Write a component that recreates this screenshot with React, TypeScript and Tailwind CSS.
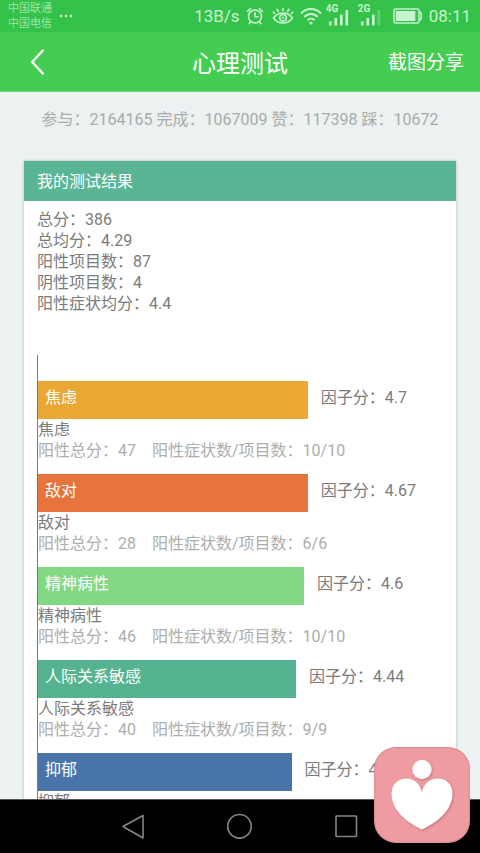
import { clsx } from "clsx";

type Factor = {
  name: string;
  total: number;
  items: string;
  score: string;
  width: number;
  color: string;
};

const stats = [
  ["参与", "2164165"],
  ["完成", "1067009"],
  ["赞", "117398"],
  ["踩", "10672"],
];

const summary = [
  ["总分", "386"],
  ["总均分", "4.29"],
  ["阳性项目数", "87"],
  ["阴性项目数", "4"],
  ["阳性症状均分", "4.4"],
];

const factors: Factor[] = [
  { name: "焦虑", total: 47, items: "10/10", score: "4.7", width: 66.6, color: "bg-[#e8a833]" },
  { name: "敌对", total: 28, items: "6/6", score: "4.67", width: 66.6, color: "bg-[#e7743c]" },
  { name: "精神病性", total: 46, items: "10/10", score: "4.6", width: 65.7, color: "bg-[#83d883]" },
  { name: "人际关系敏感", total: 40, items: "9/9", score: "4.44", width: 63.7, color: "bg-[#55b48f]" },
  { name: "抑郁", total: 57, items: "13/13", score: "4.38", width: 62.6, color: "bg-[#4874a9]" },
];

function SignalIcon({ label, weak }: { label: string; weak?: boolean }) {
  return (
    <span className="relative block h-[22px] w-[22px]">
      <span className="absolute -left-0.5 -top-0.5 text-[10px] font-bold leading-[11px]">{label}</span>
      <svg viewBox="0 0 22 22" className="h-full w-full" fill="currentColor">
        <rect x="1" y="16.5" width="2.6" height="4" />
        <rect x="6.5" y="13" width="2.6" height="7.5" />
        <rect x="12" y="9.5" width="2.6" height="11" />
        <rect x="17.5" y="5" width="2.6" height="15.5" opacity={weak ? 0.3 : 1} />
      </svg>
    </span>
  );
}

function StatusBar() {
  return (
    <div className="flex h-8 shrink-0 items-center bg-[#34c24b] pl-2 pr-[9px] text-[#c9f2cf]">
      <div className="text-[11px] font-light leading-[15px]">
        <div>中国联通</div>
        <div>中国电信</div>
      </div>
      <svg viewBox="0 0 14 4" className="ml-[7px] h-1 w-3.5" fill="currentColor">
        <circle cx="2" cy="2" r="1.3" />
        <circle cx="7" cy="2" r="1.3" />
        <circle cx="12" cy="2" r="1.3" />
      </svg>
      <div className="ml-auto flex items-center">
        <span className="text-[17px] leading-5">13B/s</span>
        <svg viewBox="0 0 18 18" className="ml-1.5 h-[18px] w-[18px]" fill="none" stroke="currentColor" strokeWidth="1.6" strokeLinecap="round">
          <circle cx="9" cy="9.5" r="6.5" />
          <path d="M9 5.8v4h3.2M1.5 4.3 4.5 1.6M16.5 4.3l-3-2.7M4.3 15l-1.2 1.7M13.7 15l1.2 1.7" />
        </svg>
        <svg viewBox="0 0 22 18" className="ml-2 h-[18px] w-[22px]" fill="none" stroke="currentColor" strokeWidth="1.6" strokeLinecap="round">
          <path d="M1.5 11C4 7.5 7.3 6 11 6s7 1.5 9.5 5c-2.5 3.5-5.8 5-9.500 5s-7-1.5-9.500-5Z" />
          <circle cx="11" cy="10.8" r="3.3" />
          <circle cx="11" cy="10.8" r="1" fill="currentColor" stroke="none" />
          <path d="M11 3.5v-2M6.3 4.3 5 2.3M15.7 4.3 17 2.3M2.6 6.5 1.2 5M19.4 6.5 20.8 5" />
        </svg>
        <svg viewBox="0 0 22 18" className="ml-1.5 h-[18px] w-[22px]" fill="none" stroke="currentColor" strokeWidth="2">
          <path d="M1 6.5C6.5.6 15.5.6 21 6.5M4.3 10c3.8-3.9 9.6-3.9 13.4 0M7.5 13.2c2-2 5-2 7 0" />
          <circle cx="11" cy="16" r="1.6" fill="currentColor" stroke="none" />
        </svg>
        <span className="ml-1.5">
          <SignalIcon label="4G" />
        </span>
        <span className="ml-2.5">
          <SignalIcon label="2G" weak />
        </span>
        <svg viewBox="0 0 30 16" className="ml-[11px] h-4 w-[30px]" fill="none" stroke="currentColor" strokeWidth="1.5">
          <rect x="1" y="1" width="25" height="14" rx="2" />
          <rect x="2.8" y="3" width="19.5" height="10" fill="currentColor" stroke="none" />
          <path d="M26.500 3.500c2.500 1 2.500 8 0 9" />
        </svg>
        <span className="ml-1.5 text-[17px] leading-5">08:11</span>
      </div>
    </div>
  );
}

function TitleBar() {
  return (
    <header className="grid h-[60px] shrink-0 grid-cols-3 items-center border-b border-[#79d583] bg-[#44cd51] px-4 text-white">
      <button type="button" aria-label="返回" className="ml-3 w-6">
        <svg viewBox="0 0 24 32" className="h-8 w-6" fill="none" stroke="currentColor" strokeWidth="2.4" strokeLinecap="round" strokeLinejoin="round">
          <path d="M14.800 4.500 4.200 16 14.800 27.500" />
        </svg>
      </button>
      <h1 className="pt-1 text-center text-2xl">心理测试</h1>
      <button type="button" className="justify-self-end pt-1 text-[19px]">
        截图分享
      </button>
    </header>
  );
}

function FactorRow({ factor }: { factor: Factor }) {
  return (
    <li className="mb-[13px]">
      <div className="flex h-[38px]">
        <div
          className={clsx("shrink-0 pl-[7px] leading-[34px] text-white", factor.color)}
          style={{ width: `${factor.width}%` }}
        >
          {factor.name}
        </div>
        <div className="whitespace-nowrap pl-[13px] leading-[34px] text-[#7b7b7b]">因子分：{factor.score}</div>
      </div>
      <div className="leading-[21px] text-[#7b7b7b]">{factor.name}</div>
      <div className="flex gap-4 whitespace-nowrap leading-[21px] text-[#adadad]">
        <span>阳性总分：{factor.total}</span>
        <span>阳性症状数/项目数：{factor.items}</span>
      </div>
    </li>
  );
}

function NavBar() {
  return (
    <nav className="flex h-[54px] shrink-0 items-center justify-center gap-[79px] border-t border-[#555] bg-black text-[#858585]">
      <button type="button" aria-label="后退">
        <svg viewBox="0 0 28 28" className="h-7 w-7" fill="none" stroke="currentColor" strokeWidth="1.6" strokeLinejoin="round">
          <path d="M24 2.500v22.500L4 13.500Z" />
        </svg>
      </button>
      <button type="button" aria-label="主页">
        <svg viewBox="0 0 28 28" className="h-7 w-7" fill="none" stroke="currentColor" strokeWidth="1.6">
          <circle cx="13.500" cy="13.300" r="11.800" />
        </svg>
      </button>
      <button type="button" aria-label="最近任务">
        <svg viewBox="0 0 28 28" className="h-7 w-7" fill="none" stroke="currentColor" strokeWidth="1.6" strokeLinejoin="round">
          <rect x="3" y="3" width="20.500" height="20.500" rx=".5" />
        </svg>
      </button>
    </nav>
  );
}

export default function App() {
  return (
    <div className="relative flex h-screen flex-col overflow-hidden bg-[#ecf2f1] font-[Roboto,'Noto_Sans_CJK_SC',sans-serif] text-base">
      <StatusBar />
      <TitleBar />
      <main className="min-h-0 flex-1 overflow-hidden px-6 pt-4">
        <p className="flex justify-center gap-1 whitespace-nowrap leading-6 text-[#a9aba9]">
          {stats.map(([label, value]) => (
            <span key={label}>
              {label}：{value}
            </span>
          ))}
        </p>
        <section className="mt-[29px] bg-white pb-6 shadow-[0_0_3px_rgba(0,0,0,0.25)]">
          <h2 className="bg-[#5ab595] px-[13px] pt-0.5 leading-[38px] text-white">我的测试结果</h2>
          <div className="px-[13px] pt-2">
            {summary.map(([label, value]) => (
              <div key={label} className="leading-[21px] text-[#7b7b7b]">
                {label}：{value}
              </div>
            ))}
            <ul className="mt-[41px] border-l border-[#777] pt-[26px]">
              {factors.map((factor) => (
                <FactorRow key={factor.name} factor={factor} />
              ))}
            </ul>
          </div>
        </section>
      </main>
      <NavBar />
      <button type="button" aria-label="心理" className="absolute bottom-2.5 right-2.5 h-24 w-24 rounded-[22px] bg-[#ee9ca1] shadow-[inset_0_0_2px_rgba(90,40,40,0.4)]">
        <svg viewBox="0 0 96 96" className="h-full w-full drop-shadow-[1px_1px_1px_rgba(130,60,70,0.4)]" fill="white">
          <circle cx="48" cy="22.5" r="9.7" />
          <path d="M48 46C47 37 40 31.5 33 31.5c-9 0-15.500 6-15.500 15C17.500 63 32 75 48 82.500 64 75 78.500 63 78.500 46.500c0-9-6-15-15-15C56 31.500 49 37 48 46Z" />
        </svg>
      </button>
    </div>
  );
}
